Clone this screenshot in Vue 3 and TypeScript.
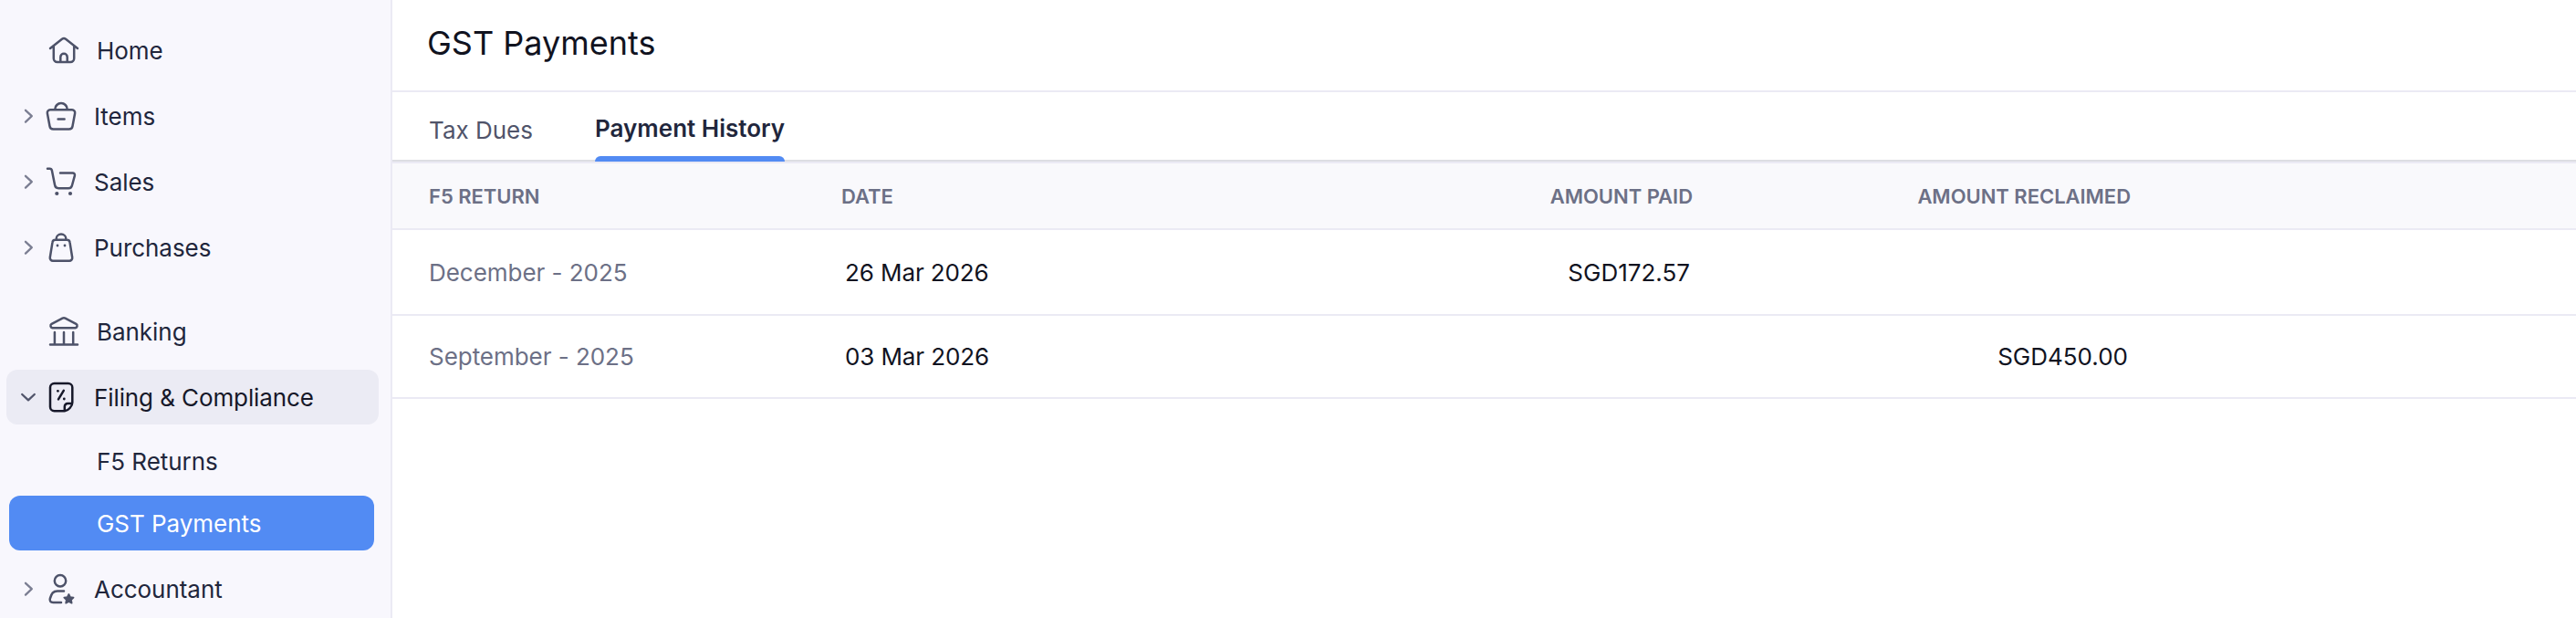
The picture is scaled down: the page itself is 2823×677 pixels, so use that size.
<script setup lang="ts">
interface Shape {
  d: string
  dots?: [number, number, number][]
  fill?: string
}

interface NavItem {
  label: string
  icon?: string
  chevron?: 'right' | 'down'
  kind?: 'open' | 'sub' | 'active'
  spaced?: boolean
}

interface Payment {
  period: string
  date: string
  paid: string
  reclaimed: string
}

const icons: Record<string, Shape> = {
  home: {
    d: 'M5 18 18 7.8Q20 6.3 22 7.8L35 18M8.8 15.5V29a4 4 0 0 0 4 4h14.4a4 4 0 0 0 4-4V15.5M16.3 33v-5.5a3.7 3.7 0 0 1 7.4 0V33',
  },
  items: {
    d: 'M8 13.3h24a3.2 3.2 0 0 1 3.1 3.9l-2.6 14a4 4 0 0 1-4 3.3h-17a4 4 0 0 1-4-3.3l-2.6-14A3.2 3.2 0 0 1 8 13.3zM13.3 13v-.5a6.7 6.4 0 0 1 13.4 0v.5M16.6 23.4h7',
  },
  sales: {
    d: 'M5 5.7h2.5q2 0 2.4 2l3.2 16a4 4 0 0 0 4 3.5h11a4 4 0 0 0 3.9-3.2l2.9-10.6a2.4 2.4 0 0 0-2.3-3H19',
    dots: [[15.3, 33, 2.1], [30, 33, 2.1]],
  },
  purchases: {
    d: 'M13.5 11.7h13a3 3 0 0 1 3 2.7l2.7 16.6a3.2 3.2 0 0 1-3.2 3.7H11a3.2 3.2 0 0 1-3.2-3.7l2.7-16.6a3 3 0 0 1 3-2.7zM14.6 11.5v-.7a5.4 5.2 0 0 1 10.8 0v.7',
    dots: [[16, 18, 1.4], [24, 18, 1.4]],
  },
  banking: {
    d: 'M18.5 5.6 6.6 11.8A2.4 2.4 0 0 0 7.3 16.2H32.7A2.4 2.4 0 0 0 33.4 11.8L21.5 5.6Q20 4.8 18.5 5.6zM9.9 21v13M20 21v13M30.2 21v13M5 34.6h30',
  },
  filing: {
    d: 'M24 35.2H12.5A4.5 4.5 0 0 1 8 30.7V9.6a4.5 4.5 0 0 1 4.5-4.5h15.3a4.5 4.5 0 0 1 4.5 4.5V26c0 3.8-4.5 9.2-8.3 9.2zM23.8 35v-4.6a3.4 3.4 0 0 1 3.4-3.4h4.8M22.8 12.8 17 22.4',
    dots: [[16.4, 13.3, 1.4], [23.3, 22, 1.4]],
  },
  accountant: {
    d: 'M25.2 11.3a6.2 6.2 0 1 1-12.4 0a6.2 6.2 0 1 1 12.4 0M23 22.4h-7c-4.8 0-6.4 2.7-8.1 8.1-.9 2.8.5 4.5 3.3 4.5H20',
    fill: 'M28.4 26l1.6 3.1 3.5.5-2.5 2.5.6 3.5-3.2-1.6-3.2 1.6.6-3.5-2.5-2.5 3.5-.5z',
  },
}

const nav: NavItem[] = [
  { label: 'Home', icon: 'home' },
  { label: 'Items', icon: 'items', chevron: 'right' },
  { label: 'Sales', icon: 'sales', chevron: 'right' },
  { label: 'Purchases', icon: 'purchases', chevron: 'right' },
  { label: 'Banking', icon: 'banking', spaced: true },
  { label: 'Filing & Compliance', icon: 'filing', chevron: 'down', kind: 'open' },
  { label: 'F5 Returns', kind: 'sub' },
  { label: 'GST Payments', kind: 'active' },
  { label: 'Accountant', icon: 'accountant', chevron: 'right' },
]

const payments: Payment[] = [
  { period: 'December - 2025', date: '26 Mar 2026', paid: 'SGD172.57', reclaimed: '' },
  { period: 'September - 2025', date: '03 Mar 2026', paid: '', reclaimed: 'SGD450.00' },
]
</script>

<template>
  <div class="app">
    <nav class="sidebar">
      <a
        v-for="item in nav"
        :key="item.label"
        class="item"
        :class="[item.kind, { spaced: item.spaced, leaf: item.icon && !item.chevron }]"
      >
        <svg v-if="item.chevron" class="chevron" :class="item.chevron" viewBox="0 0 20 20">
          <path :d="item.chevron === 'right' ? 'M7 3.8 13.8 10.2 7 16.6' : 'M3.2 7 10 13.4 16.8 7'" />
        </svg>
        <svg v-if="item.icon" class="icon" viewBox="0 0 40 40">
          <path :d="icons[item.icon].d" />
          <circle
            v-for="(c, i) in icons[item.icon].dots"
            :key="i"
            class="solid"
            :cx="c[0]"
            :cy="c[1]"
            :r="c[2]"
          />
          <path v-if="icons[item.icon].fill" class="star" :d="icons[item.icon].fill" />
        </svg>
        <span class="label">{{ item.label }}</span>
      </a>
    </nav>

    <main class="main">
      <header class="title"><h1>GST Payments</h1></header>
      <div class="tabs">
        <a class="tab">Tax Dues</a>
        <a class="tab selected">Payment History</a>
      </div>
      <div class="table">
        <div class="row head">
          <span>F5 RETURN</span>
          <span>DATE</span>
          <span class="num">AMOUNT PAID</span>
          <span class="num">AMOUNT RECLAIMED</span>
        </div>
        <div v-for="p in payments" :key="p.period" class="row">
          <span class="period">{{ p.period }}</span>
          <span class="date">{{ p.date }}</span>
          <span class="num">{{ p.paid }}</span>
          <span class="num">{{ p.reclaimed }}</span>
        </div>
      </div>
    </main>
  </div>
</template>

<style>
body {
  margin: 0;
  overflow: hidden;
}
</style>

<style scoped>
.app {
  display: flex;
  width: 2823px;
  height: 677px;
  overflow: hidden;
  background: #fff;
  color: #11131f;
  font-family: Inter, 'Liberation Sans', sans-serif;
  font-size: 26px;
  line-height: 32px;
}
.sidebar {
  box-sizing: border-box;
  flex: none;
  width: 430px;
  height: 677px;
  padding: 25px 13px 0 7px;
  background: #f8f7fd;
  border-right: 2px solid #ebeaf4;
}
.item {
  box-sizing: border-box;
  display: flex;
  align-items: center;
  height: 60px;
  margin-bottom: 12px;
  padding-left: 14px;
  border-radius: 12px;
  color: #21263c;
  white-space: nowrap;
}
.label {
  padding-top: 2px;
  letter-spacing: -0.04px;
}
.spaced {
  margin-top: 32px;
}
.leaf {
  padding-left: 43px;
}
.open {
  margin-bottom: 10px;
  background: #ebebf4;
  color: #161829;
}
.open .label {
  letter-spacing: -0.1px;
}
.sub {
  margin-bottom: 8px;
  padding-left: 99px;
}
.active {
  margin: 0 5px 12px 3px;
  padding-left: 96px;
  background: #528bf3;
  color: #fff;
}
.chevron {
  flex: none;
  width: 20px;
  height: 20px;
  margin-right: 6px;
  fill: none;
  stroke: #7b7e92;
  stroke-width: 2.3;
  stroke-linecap: round;
  stroke-linejoin: round;
}
.chevron.down {
  stroke: #50546a;
}
.icon {
  flex: none;
  width: 40px;
  height: 40px;
  margin-right: 16px;
  fill: none;
  stroke: #4d5269;
  stroke-width: 2.5;
  stroke-linecap: round;
  stroke-linejoin: round;
}
.open .icon {
  stroke: #161829;
}
.icon .solid {
  fill: #4d5269;
  stroke: none;
}
.open .icon .solid {
  fill: #161829;
}
.icon .star {
  fill: #4d5269;
  stroke-width: 1.8;
}
.main {
  flex: 1;
  min-width: 0;
}
.title {
  box-sizing: border-box;
  height: 101px;
  padding: 25px 0 0 38px;
  border-bottom: 2px solid #ebeaf4;
}
.title h1 {
  margin: 0;
  font-size: 36px;
  font-weight: 400;
  line-height: 44px;
}
.tabs {
  box-sizing: border-box;
  display: flex;
  gap: 68px;
  height: 76px;
  padding-left: 40px;
  box-shadow: inset 0 -2px #dddee3;
}
.tab {
  box-sizing: border-box;
  height: 76px;
  padding-top: 26px;
  color: #50546a;
}
.tab.selected {
  padding-top: 24px;
  color: #21263c;
  font-weight: 600;
}
.tab.selected::after {
  content: '';
  display: block;
  height: 6px;
  margin-top: 14px;
  border-radius: 6px 6px 0 0;
  background: #528bf3;
}
.row {
  box-sizing: border-box;
  display: grid;
  grid-template-columns: 452px 458px 475px 480px;
  align-items: center;
  height: 91px;
  padding-left: 40px;
  border-bottom: 2px solid #ebeaf4;
}
.head {
  height: 75px;
  border-top: 2px solid #ebeaf4;
  background: #f9f9fc;
  color: #6c7086;
  font-size: 22px;
  font-weight: 600;
  letter-spacing: -0.03px;
}
.head + .row {
  height: 94px;
  padding-top: 2px;
}
.period {
  color: #6c7086;
  letter-spacing: -0.04px;
}
.date {
  padding-left: 4px;
  letter-spacing: -0.1px;
}
.num {
  text-align: right;
}
.row:not(.head) .num {
  padding-right: 3px;
}
</style>
